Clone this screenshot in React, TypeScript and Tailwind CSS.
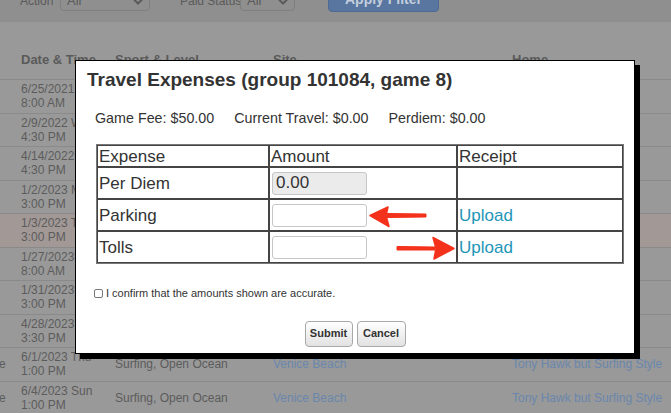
import React from 'react'

const rows = [
  { date: '6/25/2021 Fri', time: '8:00 AM' },
  { date: '2/9/2022 Wed', time: '4:30 PM' },
  { date: '4/14/2022 Thu', time: '4:30 PM' },
  { date: '1/2/2023 Mon', time: '3:00 PM' },
  { date: '1/3/2023 Tue', time: '3:00 PM', flagged: true },
  { date: '1/27/2023 Fri', time: '8:00 AM' },
  { date: '1/31/2023 Tue', time: '3:00 PM' },
  { date: '4/28/2023 Fri', time: '3:30 PM' },
  { date: '6/1/2023 Thu', time: '1:00 PM', status: 'Active', sport: 'Surfing, Open Ocean', site: 'Venice Beach', home: 'Tony Hawk but Surfing Style' },
  { date: '6/4/2023 Sun', time: '1:00 PM', status: 'Active', sport: 'Surfing, Open Ocean', site: 'Venice Beach', home: 'Tony Hawk but Surfing Style' },
]

const expenses = [
  { name: 'Per Diem', value: '0.00', readOnly: true },
  { name: 'Parking', value: '', upload: true },
  { name: 'Tolls', value: '', upload: true },
]

function Chevron() {
  return (
    <svg width="10" height="7" viewBox="0 0 10 7" className="text-[#5a5a5a]">
      <path d="M1 1.5 L5 5.5 L9 1.5" fill="none" stroke="currentColor" strokeWidth="2" />
    </svg>
  )
}

export default function App() {
  return (
    <div className="relative w-[671px] h-[413px] overflow-hidden bg-[#999999] font-['Liberation_Sans',Arial,sans-serif]">
      {/* filter bar, scrolled mostly out of view */}
      <div className="h-[22px] bg-[#8f8f8f] overflow-hidden">
        <div className="flex items-center h-[26px] -mt-[14px] text-[12px] text-[#5a5a5a] whitespace-nowrap">
          <span className="ml-[20px] w-[40px] pt-[3px]">Action</span>
          <div className="w-[90px] h-[23px] border border-[#7f7f7f] rounded-[4px] flex items-center justify-between px-[6px] pt-[4px] text-[13px]">
            <span>All</span>
            <Chevron />
          </div>
          <span className="ml-[30px] w-[60px] pt-[3px]">Paid Status</span>
          <div className="w-[55px] h-[23px] border border-[#7f7f7f] rounded-[4px] flex items-center justify-between px-[6px] pt-[4px] text-[13px]">
            <span>All</span>
            <Chevron />
          </div>
          <div className="ml-[33px] w-[111px] h-[26px] rounded-[4px] bg-[#5876a0] border border-[#4e6a92] text-[#c4cedc] font-bold text-[14px] flex items-center justify-center pt-[1px]">
            Apply Filter
          </div>
        </div>
      </div>

      {/* games list */}
      <div className="mt-[18px] -ml-[40px] text-[12px] text-[#5c5c5c] whitespace-nowrap">
        <div className="flex items-center h-[40px] border-b border-[#8a8a8a] font-bold text-[13px] text-[#5a5a5a]">
          <div className="w-[61px]" />
          <div className="w-[94px]">Date &amp; Time</div>
          <div className="w-[158px]">Sport &amp; Level</div>
          <div className="w-[239px]">Site</div>
          <div>Home</div>
        </div>
        {rows.map((r) => (
          <div
            key={r.date}
            className={`flex items-center h-[33.5px] border-b border-[#8a8a8a] ${r.flagged ? 'bg-[#a29896]' : ''}`}
          >
            <div className="w-[61px] pl-[13px]">{r.status}</div>
            <div className="w-[94px] leading-[14px]">
              <div>{r.date}</div>
              <div>{r.time}</div>
            </div>
            <div className="w-[158px]">{r.sport}</div>
            <div className="w-[239px] text-[#6a87ad]">{r.site}</div>
            <div className="text-[#6a87ad]">{r.home}</div>
          </div>
        ))}
      </div>

      {/* travel expenses dialog */}
      <div className="absolute left-[75px] top-[60px] w-[560px] h-[294px] bg-white border border-black shadow-[5px_5px_0_#000] text-[#333]">
        <h1 className="pl-[11px] pt-[7px] text-[19px] leading-[24px] font-bold">
          Travel Expenses (group 101084, game 8)
        </h1>
        <div className="flex gap-[20px] pl-[19px] mt-[17px] text-[14.3px] leading-[18px]">
          <span>Game Fee: $50.00</span>
          <span>Current Travel: $0.00</span>
          <span>Perdiem: $0.00</span>
        </div>
        <table className="ml-[20px] mt-[17px] w-[528px] table-fixed border-separate border-spacing-0 border border-[#777] text-[17px] leading-[19px]">
          <colgroup>
            <col className="w-[172px]" />
            <col className="w-[188px]" />
            <col />
          </colgroup>
          <thead>
            <tr>
              <th className="h-[22px] border border-[#444] px-[1px] text-left font-normal">Expense</th>
              <th className="border border-[#444] px-[1px] text-left font-normal">Amount</th>
              <th className="border border-[#444] px-[1px] text-left font-normal">Receipt</th>
            </tr>
          </thead>
          <tbody>
            {expenses.map((e) => (
              <tr key={e.name}>
                <td className="h-[32px] border border-[#444] px-[1px]">{e.name}</td>
                <td className="border border-[#444] px-[2px]">
                  <input
                    readOnly
                    value={e.value}
                    className={`block w-[95px] h-[23px] rounded-[3px] border border-[#c6c6c6] px-[3px] text-[17px] text-[#333] outline-none ${
                      e.readOnly ? 'bg-[#ebebeb]' : 'bg-white'
                    }`}
                  />
                </td>
                <td className="border border-[#444] px-[1px] text-[#2196b8]">{e.upload ? 'Upload' : ''}</td>
              </tr>
            ))}
          </tbody>
        </table>

        <label className="flex items-center gap-[3px] ml-[18px] mt-[21px] text-[11px]">
          <span className="w-[9px] h-[9px] rounded-[2px] border border-[#777] bg-white" />
          I confirm that the amounts shown are accurate.
        </label>

        <div className="flex justify-center gap-[4px] mt-[19px] text-[11px] font-bold">
          <button className="w-[48px] h-[26px] rounded-[4px] border border-[#a8a8a8] bg-gradient-to-b from-white to-[#e2e2e2] text-[#333]">
            Submit
          </button>
          <button className="w-[49px] h-[26px] rounded-[4px] border border-[#a8a8a8] bg-gradient-to-b from-white to-[#e2e2e2] text-[#333]">
            Cancel
          </button>
        </div>
      </div>

      {/* hand-drawn red arrows */}
      <svg className="absolute inset-0 pointer-events-none" width="671" height="413" viewBox="0 0 671 413">
        <g fill="#f4321c" stroke="#f4321c" strokeLinejoin="round">
          <path d="M387 213.5 L426 214 L426 217 L387 217.5 Z" strokeWidth="1" />
          <path d="M370 215.5 L388 207 L386 215.5 L389 226.5 Z" strokeWidth="1.5" />
          <path d="M397 246.5 L435 247 L435 250 L397 250 Z" strokeWidth="1" />
          <path d="M454 248.5 L433 237.5 L436 248.5 L434 259 Z" strokeWidth="1.5" />
        </g>
      </svg>
    </div>
  )
}
